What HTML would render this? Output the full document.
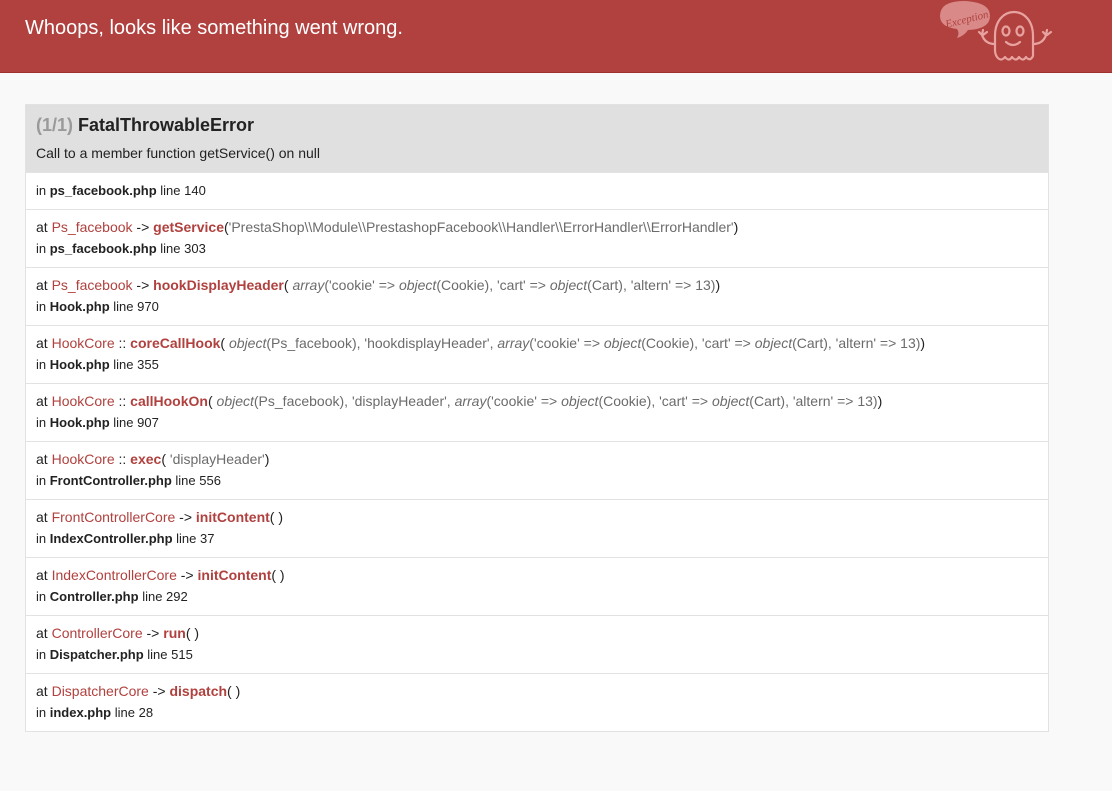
<!DOCTYPE html>
<html><head><meta charset="utf-8"><style>
html,body{margin:0;padding:0;background:#f9f9f9;font-family:"Liberation Sans",Arial,sans-serif;color:#222;}
.hdr{height:72px;background:#b0413e;border-bottom:1px solid #a0302e;position:relative;}
.hdr h1{margin:0;position:absolute;left:25px;top:17px;font-size:20px;font-weight:normal;color:#fff;}
.ghost{position:absolute;left:930px;top:0;}
.box{position:absolute;left:25px;top:104px;width:1022px;border:1px solid #e2e2e2;background:#fff;}
.top{background:#e0e0e0;height:67px;padding:0 10px;}
.top .t{font-size:18px;font-weight:bold;padding-top:10px;line-height:20px;}
.top .t span{color:#9a9a9a;}
.top .m{font-size:14px;margin-top:8px;line-height:20px;}
.row{border-top:1px solid #e2e2e2;padding:7px 10px 8px;line-height:21px;font-size:14px;}
.row:first-of-type{padding:7px 10px 9px;line-height:20px;}
.cls{color:#b0413e;}
.mth{color:#b0413e;font-weight:bold;}
.arg{color:#6b6b6b;}
.arg i{font-style:italic;}
.in{font-size:13px;color:#222;}
</style></head><body>
<div class="hdr"><h1>Whoops, looks like something went wrong.</h1>
<svg class="ghost" width="130" height="72" viewBox="0 0 130 72">
<path d="M10 16 Q10 1 34 1 Q60 2 60 16 Q60 29 38 30 Q34 36 27 38 Q30 33 27 29 Q10 27 10 16 Z" fill="#d98a88"/>
<text x="14" y="23" font-family="Liberation Serif,serif" font-style="italic" font-size="11" fill="#b0413e" transform="rotate(-14 35 16)">Exception!</text>
<g fill="none" stroke="#e8a3a1" stroke-width="2.2" stroke-linecap="round" stroke-linejoin="round">
<path d="M65 36 C65 4 103 4 103 36 L103 56 Q100 62 96 57 Q93 62 89 57 Q86 62 82 57 Q79 62 75 57 Q71 62 67 57 Q65 54 65 50 Z"/>
<ellipse cx="76" cy="31" rx="3.5" ry="4.5"/><ellipse cx="90" cy="31" rx="3.5" ry="4.5"/>
<path d="M76 42 Q83 48 90 42"/>
<path d="M65 44 Q55 44 52 35 M49 32 l3 3 M53 30 l-1 5 M57 32 l-4 3"/>
<path d="M103 44 Q113 44 116 35 M113 32 l3 3 M117 30 l-1 5 M121 32 l-4 3"/>
</g>
</svg>
</div>
<div class="box">
<div class="top"><div class="t"><span>(1/1)</span> FatalThrowableError</div><div class="m">Call to a member function getService() on null</div></div>
<div class="row"><div class="in">in <b>ps_facebook.php</b> line 140</div></div>
<div class="row"><div>at <span class="cls">Ps_facebook</span> -&gt; <span class="mth">getService</span>(<span class="arg">'PrestaShop\\Module\\PrestashopFacebook\\Handler\\ErrorHandler\\ErrorHandler'</span>)</div><div class="in">in <b>ps_facebook.php</b> line 303</div></div>
<div class="row"><div>at <span class="cls">Ps_facebook</span> -&gt; <span class="mth">hookDisplayHeader</span>(<span class="arg"> <i>array</i>('cookie' =&gt; <i>object</i>(Cookie), 'cart' =&gt; <i>object</i>(Cart), 'altern' =&gt; 13)</span>)</div><div class="in">in <b>Hook.php</b> line 970</div></div>
<div class="row"><div>at <span class="cls">HookCore</span> :: <span class="mth">coreCallHook</span>(<span class="arg"> <i>object</i>(Ps_facebook), 'hookdisplayHeader', <i>array</i>('cookie' =&gt; <i>object</i>(Cookie), 'cart' =&gt; <i>object</i>(Cart), 'altern' =&gt; 13)</span>)</div><div class="in">in <b>Hook.php</b> line 355</div></div>
<div class="row"><div>at <span class="cls">HookCore</span> :: <span class="mth">callHookOn</span>(<span class="arg"> <i>object</i>(Ps_facebook), 'displayHeader', <i>array</i>('cookie' =&gt; <i>object</i>(Cookie), 'cart' =&gt; <i>object</i>(Cart), 'altern' =&gt; 13)</span>)</div><div class="in">in <b>Hook.php</b> line 907</div></div>
<div class="row"><div>at <span class="cls">HookCore</span> :: <span class="mth">exec</span>(<span class="arg"> 'displayHeader'</span>)</div><div class="in">in <b>FrontController.php</b> line 556</div></div>
<div class="row"><div>at <span class="cls">FrontControllerCore</span> -&gt; <span class="mth">initContent</span>( )</div><div class="in">in <b>IndexController.php</b> line 37</div></div>
<div class="row"><div>at <span class="cls">IndexControllerCore</span> -&gt; <span class="mth">initContent</span>( )</div><div class="in">in <b>Controller.php</b> line 292</div></div>
<div class="row"><div>at <span class="cls">ControllerCore</span> -&gt; <span class="mth">run</span>( )</div><div class="in">in <b>Dispatcher.php</b> line 515</div></div>
<div class="row"><div>at <span class="cls">DispatcherCore</span> -&gt; <span class="mth">dispatch</span>( )</div><div class="in">in <b>index.php</b> line 28</div></div>
</div>
</body></html>
